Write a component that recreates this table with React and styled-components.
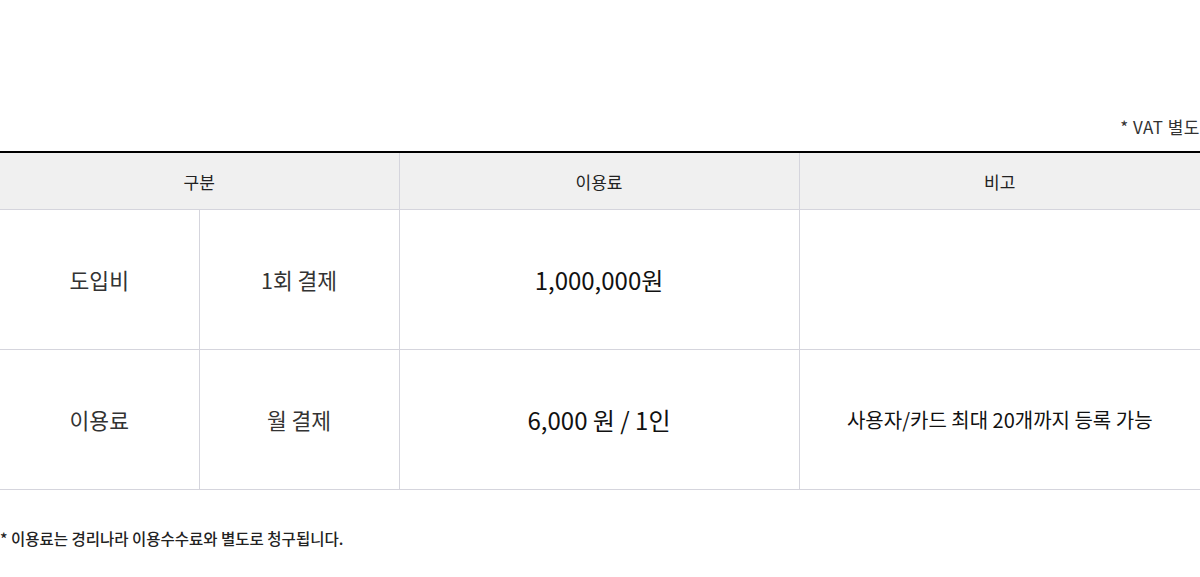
import React from 'react';
import styled, { createGlobalStyle } from 'styled-components';

const GlobalStyle = createGlobalStyle`
    body {
        margin: 0;
        background: #fff;
        font-family: 'Noto Sans CJK KR', 'Noto Sans', sans-serif;
        color: #222;
    }
`
const Wrapper = styled.div`
    width: 1200px;
    padding-top: 115px;
`
const VatNote = styled.p`
    margin: 0 0 13px;
    text-align: right;
    font-size: 17px;
    letter-spacing: 0.5px;
    line-height: 23px;
    color: #333;
`
const Table = styled.table`
    width: 100%;
    border-collapse: collapse;
    table-layout: fixed;
    border-top: 2px solid #000;
`
const HeadCell = styled.th`
    height: 56px;
    padding: 0;
    background: #f0f0f0;
    font-size: 17px;
    font-weight: 400;
    color: #222;
    border-bottom: 1px solid #d5d5dd;
    border-left: 1px solid #d5d5dd;
    &:first-child { border-left: 0; }
`
const Cell = styled.td`
    height: 139px;
    padding: 0;
    text-align: center;
    font-size: ${p => p.$size || 21.5}px;
    color: ${p => p.$dark ? '#111' : '#333'};
    border-bottom: 1px solid #d5d5dd;
    border-left: 1px solid #d5d5dd;
    &:first-child { border-left: 0; }
`
const FootNote = styled.p`
    margin: 37px 0 0;
    font-size: 15.5px;
    font-weight: 500;
    line-height: 22px;
    color: #222;
`

const rows = [
    { name: '도입비', cycle: '1회 결제', fee: '1,000,000원', note: '' },
    { name: '이용료', cycle: '월 결제', fee: '6,000 원 / 1인', note: '사용자/카드 최대 20개까지 등록 가능' },
];

export default function App() {
    return (
        <Wrapper>
            <GlobalStyle />
            <VatNote>* VAT 별도</VatNote>
            <Table>
                <colgroup>
                    <col style={{ width: 199 }} />
                    <col style={{ width: 200 }} />
                    <col style={{ width: 400 }} />
                    <col style={{ width: 401 }} />
                </colgroup>
                <thead>
                    <tr>
                        <HeadCell colSpan={2}>구분</HeadCell>
                        <HeadCell>이용료</HeadCell>
                        <HeadCell>비고</HeadCell>
                    </tr>
                </thead>
                <tbody>
                    {rows.map(row => (
                        <tr key={row.name}>
                            <Cell>{row.name}</Cell>
                            <Cell>{row.cycle}</Cell>
                            <Cell $size={24} $dark>{row.fee}</Cell>
                            <Cell $size={20} $dark>{row.note}</Cell>
                        </tr>
                    ))}
                </tbody>
            </Table>
            <FootNote>* 이용료는 경리나라 이용수수료와 별도로 청구됩니다.</FootNote>
        </Wrapper>
    );
}
